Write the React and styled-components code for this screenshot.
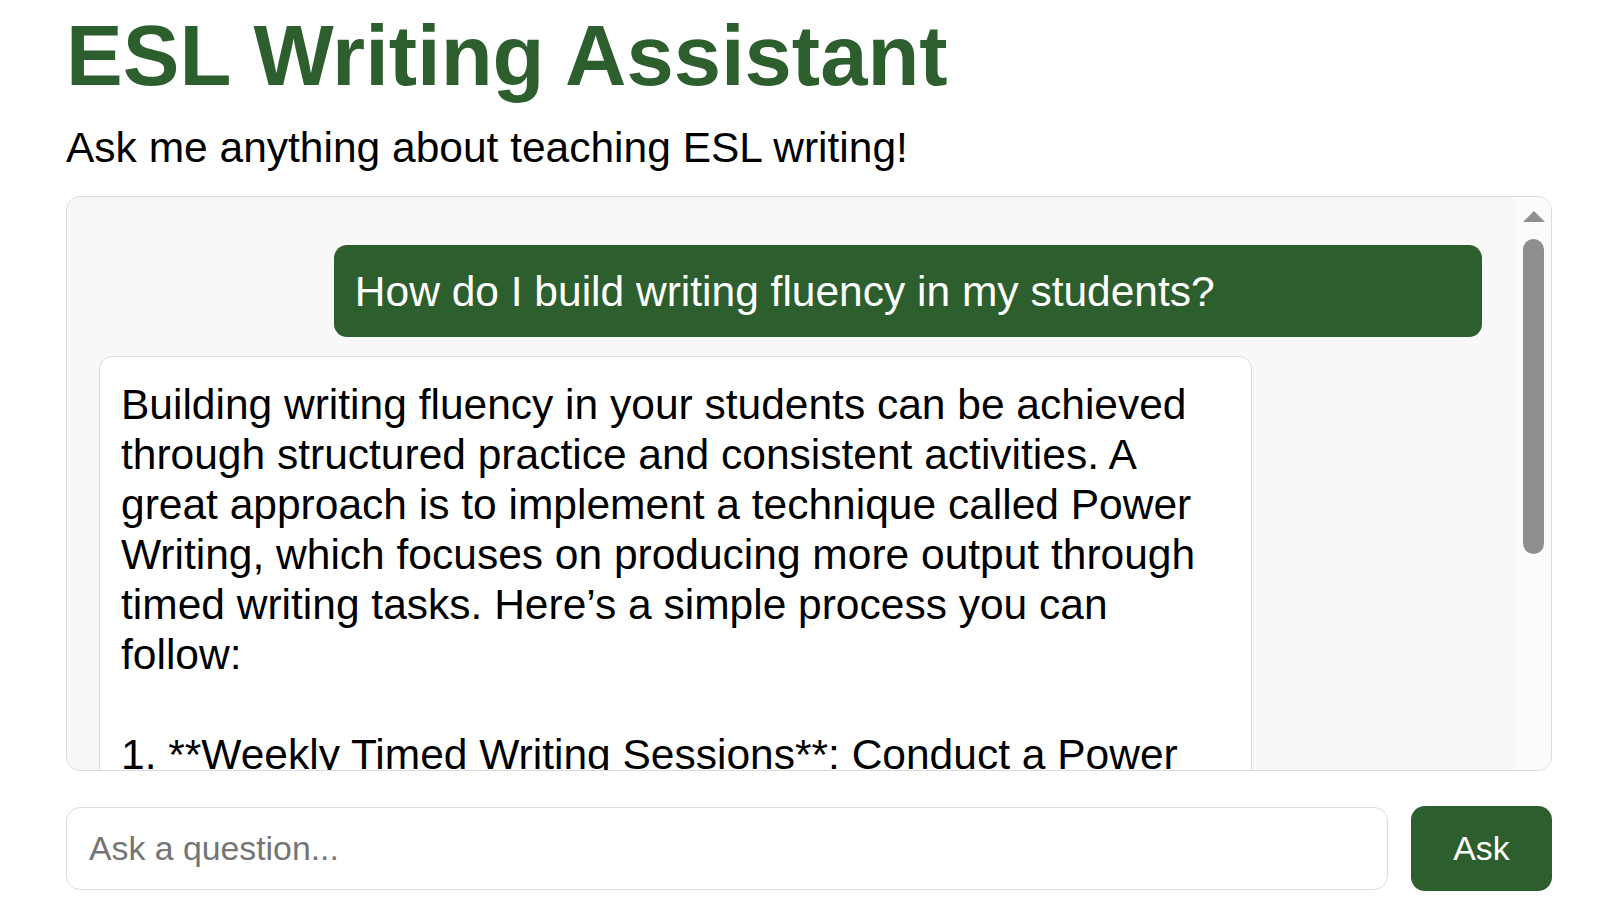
import styled, { createGlobalStyle } from "styled-components"

const GlobalStyle = createGlobalStyle`
    html, body {
        margin : 0;
        padding : 0;
        background : #fff;
    }
    body {
        font-family : "Liberation Sans", Arial, sans-serif;
        color : #000;
    }
`

const Page = styled.div`
    padding : 7px 48px 0 66px;
    display : flex;
    flex-direction : column;
`
const Title = styled.h1`
    margin : 0;
    font-size : 85px;
    line-height : 97px;
    font-weight : 700;
    color : #2d5f2e;
    white-space : nowrap;
`
const Subtitle = styled.p`
    margin : 19px 0 0;
    font-size : 42.5px;
    line-height : 50px;
`
const ChatBox = styled.div`
    margin-top : 23px;
    height : 575px;
    box-sizing : border-box;
    border : 1.5px solid #dcdcdc;
    border-radius : 14px;
    background : #f8f8f8;
    display : flex;
    overflow : hidden;
`
const Messages = styled.div`
    flex : 1;
    min-width : 0;
    overflow : hidden;
    padding : 48px 32px 0 32px;
    display : flex;
    flex-direction : column;
    gap : 19px;
`
const Bubble = styled.div`
    width : ${({ $user }) => ($user ? "82.9%" : "83.25%")};
    margin-right : ${({ $user }) => ($user ? "2px" : "0")};
    box-sizing : border-box;
    align-self : ${({ $user }) => ($user ? "flex-end" : "flex-start")};
    background : ${({ $user }) => ($user ? "#2d5f2e" : "#fff")};
    color : ${({ $user }) => ($user ? "#fff" : "#000")};
    border : ${({ $user }) => ($user ? "none" : "1.5px solid #dcdcdc")};
    border-radius : 13px;
    padding : ${({ $user }) => ($user ? "22px 20px 20px 21px" : "22.5px 18px 19px 21px")};
    font-size : 42.5px;
    line-height : 50px;
    white-space : pre-wrap;
    flex-shrink : 0;
`
const ScrollTrack = styled.div`
    width : 35px;
    flex-shrink : 0;
    background : #fbfbfb;
    display : flex;
    flex-direction : column;
    align-items : center;
    padding-top : 14px;
    gap : 17px;
`
const Thumb = styled.div`
    width : 21px;
    height : 315px;
    border-radius : 11px;
    background : #8f8f8f;
`
const InputRow = styled.form`
    margin-top : 35px;
    display : flex;
    align-items : center;
    gap : 23px;
`
const Input = styled.input`
    flex : 1;
    height : 83px;
    box-sizing : border-box;
    border : 1.5px solid #dcdcdc;
    border-radius : 14px;
    padding : 0 22px;
    font-family : "Liberation Sans", Arial, sans-serif;
    font-size : 33.8px;
    color : #000;
    background : #fff;
    outline : none;
    &::placeholder {
        color : #757575;
    }
`
const AskButton = styled.button`
    width : 141px;
    height : 85px;
    border : none;
    border-radius : 14px;
    background : #2d5f2e;
    color : #fff;
    font-family : "Liberation Sans", Arial, sans-serif;
    font-size : 33.8px;
    cursor : pointer;
`

const answer = `Building writing fluency in your students can be achieved through structured practice and consistent activities. A great approach is to implement a technique called Power Writing, which focuses on producing more output through timed writing tasks. Here’s a simple process you can follow:

1. **Weekly Timed Writing Sessions**: Conduct a Power Writing session once a week where students write as much as they can on a given topic for a set amount of time.

2. **Track Progress**: Have students count their words and record them so they can see their fluency grow over time.`

const App = () => {
    return (
        <Page>
            <GlobalStyle />
            <Title>ESL Writing Assistant</Title>
            <Subtitle>Ask me anything about teaching ESL writing!</Subtitle>
            <ChatBox>
                <Messages>
                    <Bubble $user>How do I build writing fluency in my students?</Bubble>
                    <Bubble>{answer}</Bubble>
                </Messages>
                <ScrollTrack>
                    <svg width="22" height="11" viewBox="0 0 22 11">
                        <path d="M11 0 L22 11 L0 11 Z" fill="#8f8f8f" />
                    </svg>
                    <Thumb />
                </ScrollTrack>
            </ChatBox>
            <InputRow onSubmit={(e) => e.preventDefault()}>
                <Input placeholder="Ask a question..." />
                <AskButton type="submit">Ask</AskButton>
            </InputRow>
        </Page>
    )
}

export default App
